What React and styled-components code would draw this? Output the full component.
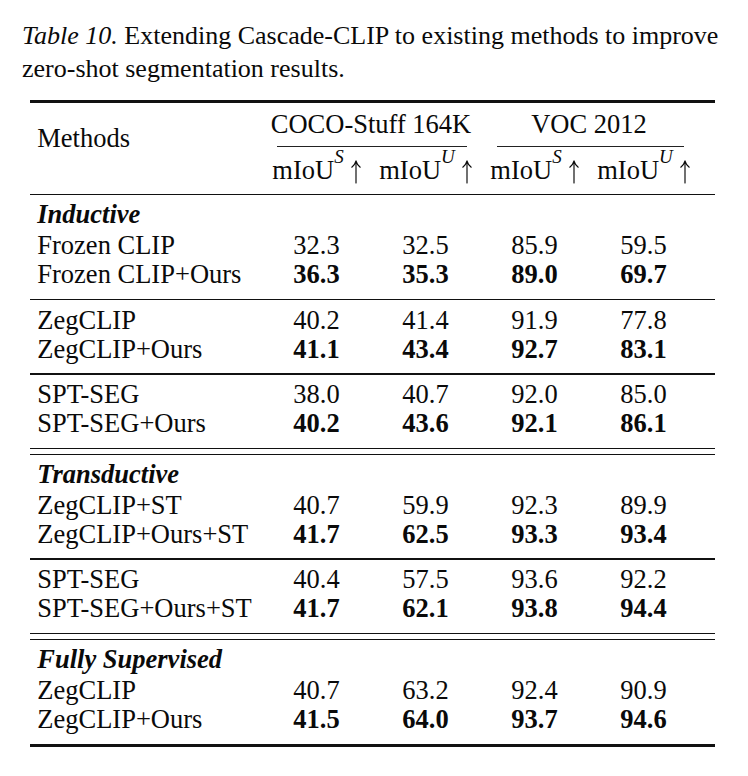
import React from "react";
import styled, { createGlobalStyle } from "styled-components";

const FONT = `"Liberation Serif", "Times New Roman", Times, serif`;
const COLS = "232px repeat(4, 109px)";

const GlobalStyle = createGlobalStyle`
  html, body { margin: 0; padding: 0; background: #ffffff; }
  body { font-family: ${FONT}; color: #0a0a0a; }
`;

const Page = styled.div`
  width: 748px;
  box-sizing: border-box;
  padding: 18.8px 0 0 22px;
`;

const Caption = styled.p`
  margin: 0;
  width: 718px;
  font-size: 26px;
  line-height: 33.4px;
`;

const Label = styled.span`
  font-style: italic;
`;

const Table = styled.div`
  margin: 14.4px 0 0 8px;
  width: 684.5px;
  display: flex;
  flex-direction: column;
  font-size: 26.5px;
  line-height: 29.2px;
`;

const Rule = styled.div`
  height: ${(p) => p.$h}px;
  background: #111;
`;

const DoubleRule = styled.div`
  height: 5px;
  border-top: 1.6px solid #111;
  border-bottom: 1.6px solid #111;
`;

const HeaderGrid = styled.div`
  display: grid;
  grid-template-columns: ${COLS};
  padding: 6.76px 0 8.04px;
`;

const MethodsHead = styled.div`
  grid-row: 1 / span 2;
  padding: 14px 0 0 7.3px;
`;

const SpanHead = styled.div`
  grid-column: span 2;
  display: flex;
  flex-direction: column;
  text-align: center;
  white-space: nowrap;
`;

const CMidRule = styled.div`
  height: 1px;
  background: #222;
  margin: 7.24px ${(p) => p.$r}px 0 ${(p) => p.$l}px;
`;

const SubHead = styled.div`
  text-align: center;
  padding-top: 9.26px;
  white-space: nowrap;
`;

const Sup = styled.sup`
  font-size: 19px;
  font-style: italic;
  vertical-align: 16px;
  line-height: 0;
`;

const ArrowSvg = styled.svg`
  width: 10px;
  height: 23px;
  margin-left: 7px;
  vertical-align: -4px;
  overflow: visible;
`;

const Group = styled.div`
  padding: 5.16px 0 9.34px;
`;

const SectionTitle = styled.div`
  padding: 0 0 1.5px 7.3px;
  font-weight: 700;
  font-style: italic;
`;

const Row = styled.div`
  display: grid;
  grid-template-columns: ${COLS};
`;

const MethodCell = styled.div`
  padding-left: 7.3px;
  white-space: nowrap;
`;

const NumCell = styled.div`
  text-align: center;
  font-weight: ${(p) => (p.$bold ? 700 : 400)};
`;

const sections = [
  {
    title: "Inductive",
    groups: [
      [
        ["Frozen CLIP", ["32.3", "32.5", "85.9", "59.5"], false],
        ["Frozen CLIP+Ours", ["36.3", "35.3", "89.0", "69.7"], true],
      ],
      [
        ["ZegCLIP", ["40.2", "41.4", "91.9", "77.8"], false],
        ["ZegCLIP+Ours", ["41.1", "43.4", "92.7", "83.1"], true],
      ],
      [
        ["SPT-SEG", ["38.0", "40.7", "92.0", "85.0"], false],
        ["SPT-SEG+Ours", ["40.2", "43.6", "92.1", "86.1"], true],
      ],
    ],
  },
  {
    title: "Transductive",
    groups: [
      [
        ["ZegCLIP+ST", ["40.7", "59.9", "92.3", "89.9"], false],
        ["ZegCLIP+Ours+ST", ["41.7", "62.5", "93.3", "93.4"], true],
      ],
      [
        ["SPT-SEG", ["40.4", "57.5", "93.6", "92.2"], false],
        ["SPT-SEG+Ours+ST", ["41.7", "62.1", "93.8", "94.4"], true],
      ],
    ],
  },
  {
    title: "Fully Supervised",
    groups: [
      [
        ["ZegCLIP", ["40.7", "63.2", "92.4", "90.9"], false],
        ["ZegCLIP+Ours", ["41.5", "64.0", "93.7", "94.6"], true],
      ],
    ],
  },
];

const UpArrow = () => (
  <ArrowSvg viewBox="0 0 10 23" aria-hidden="true">
    <path
      d="M5 23 V1.2 M0.8 7.2 Q4 4.6 5 0.8 Q6 4.6 9.2 7.2"
      fill="none"
      stroke="#0a0a0a"
      strokeWidth="1.15"
      strokeLinecap="round"
      strokeLinejoin="round"
    />
  </ArrowSvg>
);

const Metric = ({ sup }) => (
  <SubHead>
    mIoU<Sup>{sup}</Sup>
    <UpArrow />
  </SubHead>
);

export default function App() {
  return (
    <>
      <GlobalStyle />
      <Page>
        <Caption>
          <Label>{"Table 10. "}</Label>Extending Cascade-CLIP to existing
          methods to improve zero-shot segmentation results.
        </Caption>
        <Table>
          <Rule $h={3} />
          <HeaderGrid>
            <MethodsHead>Methods</MethodsHead>
            <SpanHead>
              COCO-Stuff 164K
              <CMidRule $l={15} $r={13} />
            </SpanHead>
            <SpanHead>
              VOC 2012
              <CMidRule $l={17} $r={14} />
            </SpanHead>
            <Metric sup="S" />
            <Metric sup="U" />
            <Metric sup="S" />
            <Metric sup="U" />
          </HeaderGrid>
          <Rule $h={1.6} />
          {sections.map((sec, si) => (
            <React.Fragment key={sec.title}>
              {sec.groups.map((g, gi) => (
                <React.Fragment key={gi}>
                  <Group>
                    {gi === 0 && <SectionTitle>{sec.title}</SectionTitle>}
                    {g.map(([name, vals, bold]) => (
                      <Row key={name}>
                        <MethodCell>{name}</MethodCell>
                        {vals.map((v, vi) => (
                          <NumCell key={vi} $bold={bold}>
                            {v}
                          </NumCell>
                        ))}
                      </Row>
                    ))}
                  </Group>
                  {gi < sec.groups.length - 1 && <Rule $h={1.6} />}
                </React.Fragment>
              ))}
              {si < sections.length - 1 ? <DoubleRule /> : <Rule $h={3} />}
            </React.Fragment>
          ))}
        </Table>
      </Page>
    </>
  );
}
